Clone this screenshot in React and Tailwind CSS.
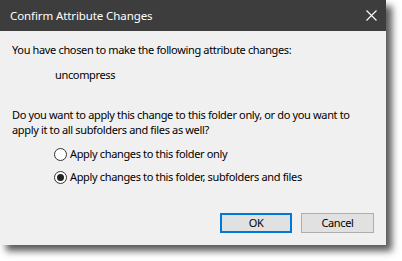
import { useState } from 'react'

function Radio({ checked, label, onClick }) {
  return (
    <button type="button" onClick={onClick} className="flex items-center h-[16px] text-left whitespace-nowrap">
      <span className="w-[13px] h-[13px] rounded-full border border-[#333] bg-white flex items-center justify-center shrink-0">
        {checked && <span className="w-[7px] h-[7px] rounded-full bg-[#222]" />}
      </span>
      <span className="ml-[3px]">{label}</span>
    </button>
  )
}

export default function App() {
  const [scope, setScope] = useState('all')

  return (
    <div className="w-[402px] h-[261px] bg-white overflow-hidden" style={{ fontFamily: '"Noto Sans", "Open Sans", sans-serif' }}>
      <div className="w-[386px] h-[245px] bg-[#f0f0f0] flex flex-col shadow-[6px_6px_7px_rgba(0,0,0,0.65)]">
        {/* Title bar */}
        <div className="h-[31px] bg-[#3d3d3d] text-white flex items-center justify-between pl-[10px] pr-[9px] shrink-0">
          <span className="text-[11.5px] tracking-[-0.1px] whitespace-nowrap">Confirm Attribute Changes</span>
          <svg width="11" height="11" viewBox="0 0 11 11" stroke="white" strokeWidth="1.1" fill="none">
            <path d="M0.5 0.5l10 10M10.5 0.5l-10 10" />
          </svg>
        </div>

        {/* Body */}
        <div className="flex-1 flex flex-col text-[11px] tracking-[-0.35px] text-black pl-[12px] pr-[12px] whitespace-nowrap">
          <p className="mt-[11px] leading-[16px]">You have chosen to make the following attribute changes:</p>
          <p className="mt-[9px] ml-[43px] leading-[16px]">uncompress</p>
          <p className="mt-[24px] leading-[15px]">
            Do you want to apply this change to this folder only, or do you want to
            <br />
            apply it to all subfolders and files as well?
          </p>
          <div className="mt-[9px] ml-[42px] flex flex-col gap-[7px]">
            <Radio checked={scope === 'folder'} label="Apply changes to this folder only" onClick={() => setScope('folder')} />
            <Radio checked={scope === 'all'} label="Apply changes to this folder, subfolders and files" onClick={() => setScope('all')} />
          </div>
          <div className="mt-[28px] flex justify-end gap-[9px]">
            <button type="button" className="w-[72px] h-[20px] bg-[#e1e1e1] border-2 border-[#0078d7] flex items-center justify-center">
              OK
            </button>
            <button type="button" className="w-[73px] h-[20px] bg-[#e1e1e1] border border-[#adadad] flex items-center justify-center">
              Cancel
            </button>
          </div>
        </div>
      </div>
    </div>
  )
}
